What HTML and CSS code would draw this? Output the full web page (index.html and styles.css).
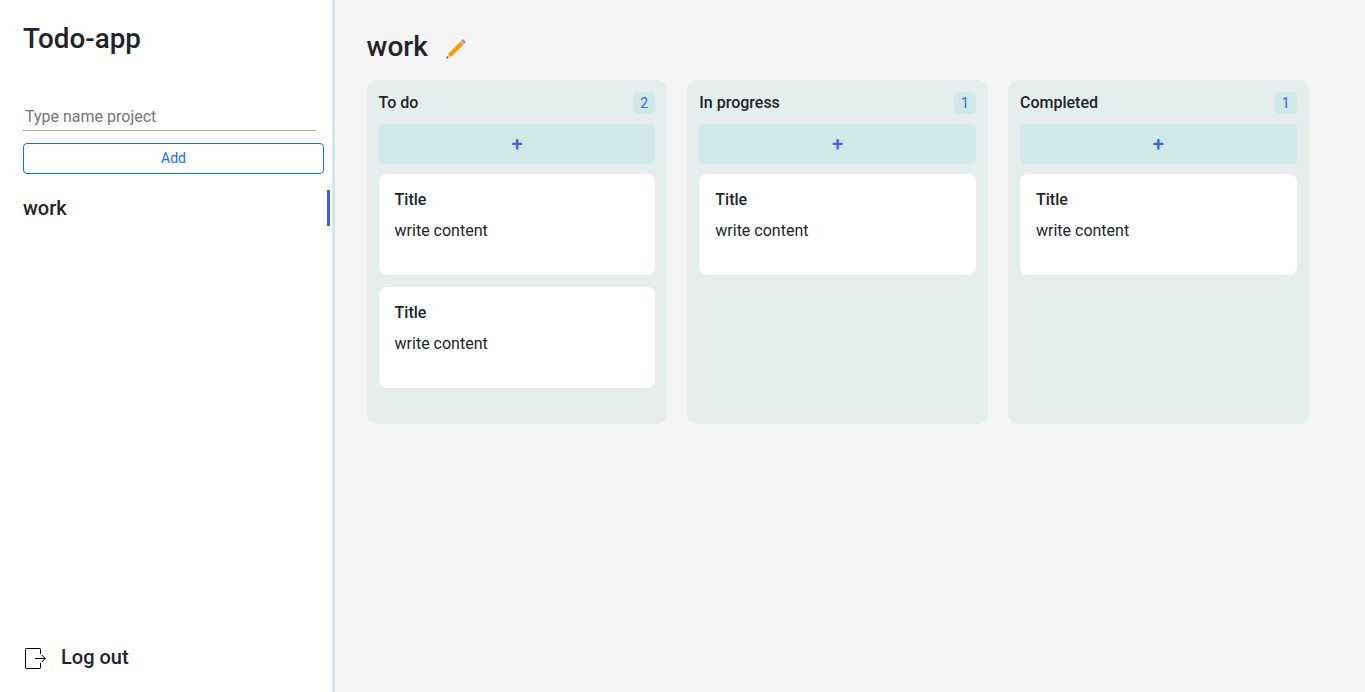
FILE: index.html
```html
<!DOCTYPE html>
<html lang="en">
<head>
<meta charset="utf-8">
<title>Todo-app</title>
<link rel="stylesheet" href="styles.css">
</head>
<body>
<div class="app">
  <aside class="sidebar">
    <h1 class="brand">Todo-app</h1>
    <form class="project-form">
      <input class="project-input" type="text" placeholder="Type name project">
      <button class="project-add" type="button">Add</button>
    </form>
    <nav class="projects">
      <a class="project active">work</a>
    </nav>
    <a class="logout">
      <svg class="logout-icon" viewBox="0 0 24 24" width="24" height="24" fill="none" stroke="#000">
        <path d="M17.500 9V4.200a.7.700 0 0 0-.7-.7H3.200a.7.700 0 0 0-.7.700v18.600a.7.700 0 0 0 .7.700h13.600a.7.700 0 0 0 .7-.7V18"/>
        <path d="M12 13.500h10.500M18.700 10l3.500 3.500-3.500 3.500"/>
      </svg>
      <span>Log out</span>
    </a>
  </aside>
  <main class="board">
    <header class="board-head">
      <h2 class="board-title">work</h2>
      <svg class="pencil" viewBox="0 0 20 20" width="20" height="20">
        <path d="M0.500 19.500l1.500-4.500L5 18z" fill="#ffd04d"/>
        <path d="M0.500 19.500l.7-2.200 1.500 1.500z" fill="#333"/>
        <path d="M2 15L14 3 17 6 5 18z" fill="#ff9800"/>
        <path d="M14 3l1.700-1.700 3 3L17 6z" fill="#b0bec5"/>
        <path d="M15.500 1.500l.8-.7c.5-.5 1.200-.4 1.700.1l1.100 1.100c.5.500.5 1.200 0 1.700l-.6.800z" fill="#f06b78"/>
      </svg>
    </header>
    <div class="columns">
      <section class="column">
        <div class="column-head"><h3 class="column-title">To do</h3><span class="count">2</span></div>
        <button class="add-card" type="button">+</button>
        <article class="card"><h4 class="card-title">Title</h4><p class="card-text">write content</p></article>
        <article class="card"><h4 class="card-title">Title</h4><p class="card-text">write content</p></article>
      </section>
      <section class="column">
        <div class="column-head"><h3 class="column-title">In progress</h3><span class="count">1</span></div>
        <button class="add-card" type="button">+</button>
        <article class="card"><h4 class="card-title">Title</h4><p class="card-text">write content</p></article>
      </section>
      <section class="column">
        <div class="column-head"><h3 class="column-title">Completed</h3><span class="count">1</span></div>
        <button class="add-card" type="button">+</button>
        <article class="card"><h4 class="card-title">Title</h4><p class="card-text">write content</p></article>
      </section>
    </div>
  </main>
</div>
</body>
</html>
```
FILE: styles.css
```css
* { box-sizing: border-box; }
body {
  margin: 0;
  font: 16px/24px Roboto, sans-serif;
  color: #212529;
  background: #f5f5f5;
}
h1, h2, h3, h4, p { margin: 0; font-weight: 500; }
button, input { font-family: inherit; }
.app { display: flex; height: 100vh; }
.sidebar {
  display: flex;
  flex-direction: column;
  width: 335px;
  flex: none;
  padding: 22px 2px 19px 23px;
  background: #fff;
  border-right: 3px solid #d0e8e8;
}
.brand { font-size: 27.8px; line-height: 34px; }
.project-form { display: flex; flex-direction: column; margin: 46px 6px 0 0; }
.project-input {
  width: 293px;
  height: 29px;
  padding: 1px 2px;
  border: 0;
  border-bottom: 1px solid #aaa;
  background: transparent;
  font-size: 16px;
  outline: 0;
}
.project-input::placeholder { color: #757575; }
.project-add {
  height: 31px;
  margin-top: 12px;
  padding: 0;
  border: 1px solid #0d6efd;
  border-radius: 4px;
  background: #fff;
  color: #0d6efd;
  font-size: 14px;
  line-height: 21px;
}
.projects { margin-top: 16px; }
.project {
  display: block;
  height: 36px;
  font-size: 20px;
  font-weight: 500;
  line-height: 36px;
}
.project.active { border-right: 3px solid #3f5ff0; }
.logout {
  display: flex;
  align-items: center;
  gap: 14px;
  margin-top: auto;
  font-size: 20px;
  font-weight: 500;
  line-height: 32px;
}
.board { flex: 1; padding: 30px 56.3px 0 31.6px; }
.board-head { display: flex; align-items: center; gap: 18.4px; height: 34px; }
.board-title { font-size: 28px; line-height: 34px; }
.pencil { margin-top: 4px; }
.columns {
  display: grid;
  grid-template-columns: repeat(3, 1fr);
  gap: 20px;
  margin-top: 16px;
}
.column { min-height: 344px; padding: 12px; border-radius: 10px; background: #e5eeed; }
.column-head { display: flex; justify-content: space-between; height: 22px; }
.column-title { font-size: 16px; line-height: 22px; }
.count {
  width: 22px;
  height: 22px;
  border-radius: 5px;
  background: #d0e8e8;
  color: #3f5ff0;
  font-size: 14px;
  line-height: 22px;
  text-align: center;
}
.add-card {
  display: block;
  width: 100%;
  height: 40px;
  margin: 10px 0;
  padding: 0;
  border: 0;
  border-radius: 5px;
  background: #d0e8e8;
  color: #3f5ff0;
  font-size: 20px;
  font-weight: 500;
}
.card { height: 101px; padding: 16px; border-radius: 8px; background: #fff; }
.card + .card { margin-top: 12px; }
.card-title { font-size: 16px; line-height: 19px; }
.card-text { margin-top: 10px; font-weight: 400; }
```
